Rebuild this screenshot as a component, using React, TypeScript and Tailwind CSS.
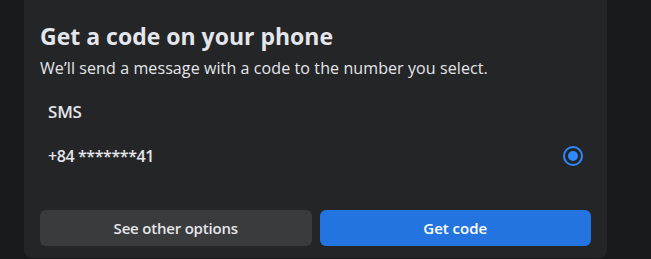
import React, { useState } from 'react';

export default function App() {
  const [selected, setSelected] = useState(true);

  return (
    <div
      className="w-[651px] h-[259px] bg-[#18191a] overflow-hidden"
      style={{ fontFamily: '"Open Sans", "Noto Sans", sans-serif' }}
    >
      <div className="ml-[24px] w-[583px] h-[258px] bg-[#242526] rounded-b-lg px-4 flex flex-col">
        <h1 className="mt-[20px] text-[23px] leading-[32px] font-bold text-[#e4e6eb]">
          Get a code on your phone
        </h1>
        <p className="mt-[5px] text-[16px] leading-[22px] text-[#e4e6eb] tracking-[0.1px]">
          We’ll send a message with a code to the number you select.
        </p>

        <div className="mt-[22px] px-2 text-[17px] leading-[22px] font-semibold text-[#e4e6eb] tracking-[-0.2px]">
          SMS
        </div>

        <label
          className="mt-[22px] px-2 flex items-center justify-between cursor-pointer"
          onClick={() => setSelected(true)}
        >
          <span className="text-[16px] leading-[22px] font-semibold text-[#e4e6eb] tracking-[-0.4px]">
            +84 *******41
          </span>
          <span className="w-5 h-5 rounded-full border-2 border-[#2e89ff] flex items-center justify-center">
            {selected && <span className="w-[10px] h-[10px] rounded-full bg-[#2e89ff]" />}
          </span>
        </label>

        <div className="mt-auto mb-3 flex gap-2">
          <button className="flex-1 h-9 rounded-md bg-[#3a3b3c] text-[15px] font-semibold text-[#e4e6eb] tracking-[-0.2px]">
            See other options
          </button>
          <button className="flex-1 h-9 rounded-md bg-[#2374e1] text-[15px] font-semibold text-white">
            Get code
          </button>
        </div>
      </div>
    </div>
  );
}
